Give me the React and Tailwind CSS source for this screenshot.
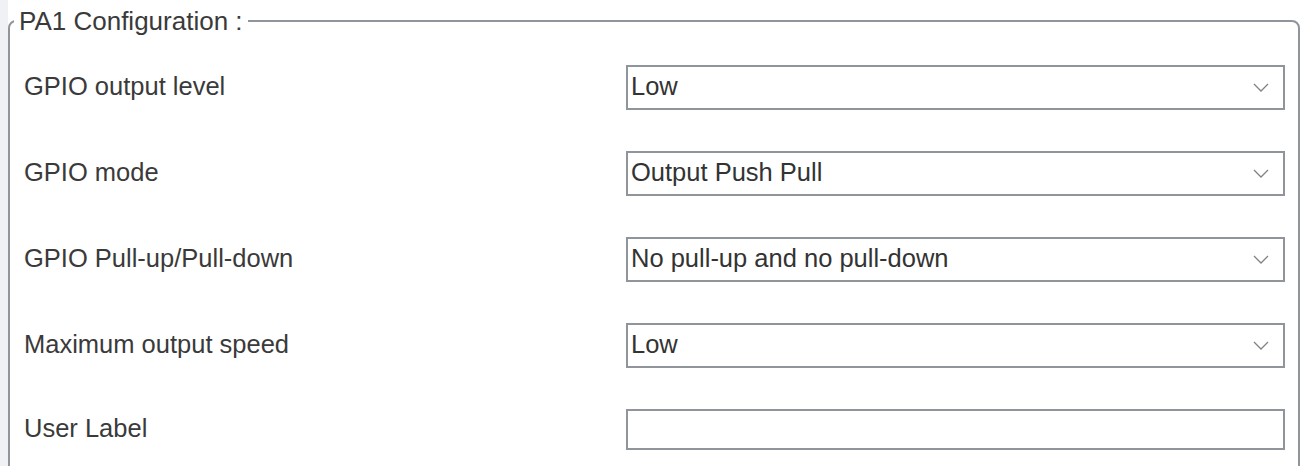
import React from 'react';

// Pin configuration panel (PA1)
const fields = [
  { label: 'GPIO output level', value: 'Low', type: 'select' },
  { label: 'GPIO mode', value: 'Output Push Pull', type: 'select' },
  { label: 'GPIO Pull-up/Pull-down', value: 'No pull-up and no pull-down', type: 'select' },
  { label: 'Maximum output speed', value: 'Low', type: 'select' },
  { label: 'User Label', value: '', type: 'text' },
];

const Chevron = () => (
  <svg width="16" height="9" viewBox="0 0 16 9" className="shrink-0">
    <path d="M1 1 L8 8 L15 1" fill="none" stroke="#7d8388" strokeWidth="1.3" />
  </svg>
);

const Field = ({ field }) => {
  if (field.type === 'select') {
    return (
      <div className="flex h-[45px] w-[659px] items-center justify-between border-2 border-[#8f959a] bg-white pl-[3px] pr-[14px]">
        <span className="text-[25.5px] leading-none text-[#333]">{field.value}</span>
        <Chevron />
      </div>
    );
  }
  return <div className="h-[41px] w-[659px] border-2 border-[#8f959a] bg-white" />;
};

export default function App() {
  return (
    <div
      className="flex h-[466px] w-[1304px] overflow-hidden bg-white"
      style={{ fontFamily: '"Liberation Sans", Arial, sans-serif' }}
    >
      <div className="w-[8px] shrink-0 bg-[#f0f1f4]" />
      <fieldset className="mt-[7px] h-[520px] w-[1292px] shrink-0 rounded-[8px] border-2 border-[#8f959a] px-[4px]">
        <legend className="px-[5px] text-[26px] leading-[28px] text-[#3a3a3a]">PA1 Configuration :</legend>
        <div className="flex flex-col pl-[10px] pt-[9px]">
          {fields.map((f, i) => (
            <div key={i} className={`flex items-center ${i === fields.length - 1 ? 'h-[82px]' : 'h-[86px]'}`}>
              <div className="w-[602px] text-[25.5px] leading-none text-[#3a3a3a]">{f.label}</div>
              <Field field={f} />
            </div>
          ))}
        </div>
      </fieldset>
    </div>
  );
}
